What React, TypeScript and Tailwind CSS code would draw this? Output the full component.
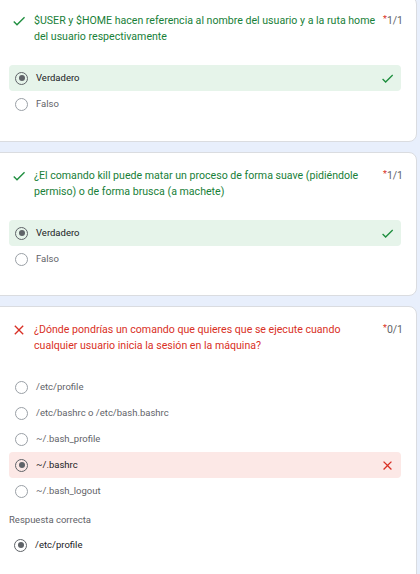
import React from "react";

type Opt = { label: string; state?: "ok" | "bad"; selected?: boolean };

const Check = ({ className = "" }: { className?: string }) => (
  <svg viewBox="0 0 24 24" className={className} fill="currentColor">
    <path d="M9 16.17 4.83 12l-1.42 1.41L9 19 21 7l-1.41-1.41z" />
  </svg>
);

const Cross = ({ className = "" }: { className?: string }) => (
  <svg viewBox="0 0 24 24" className={className} fill="currentColor">
    <path d="M19 6.41 17.59 5 12 10.59 6.41 5 5 6.41 10.59 12 5 17.59 6.41 19 12 13.41 17.59 19 19 17.59 13.41 12z" />
  </svg>
);

const Radio = ({ selected }: { selected?: boolean }) => (
  <span
    className={
      "flex h-[13px] w-[13px] shrink-0 items-center justify-center rounded-full border " +
      (selected ? "border-[#5f6368]" : "border-[#9aa0a6]")
    }
  >
    {selected && <span className="h-[6px] w-[6px] rounded-full bg-[#5f6368]" />}
  </span>
);

const Option = ({ label, state, selected }: Opt) => {
  const bg = state === "ok" ? "bg-[#e6f4ea]" : state === "bad" ? "bg-[#fce8e6]" : "";
  return (
    <div className={"flex h-[26px] items-center rounded pl-[6px] pr-[6px] " + bg}>
      <Radio selected={selected} />
      <span
        className={
          "ml-[8px] flex-1 text-[9.5px] " + (selected ? "text-[#202124]" : "text-[#5f6368]")
        }
      >
        {label}
      </span>
      {state === "ok" && <Check className="h-[15px] w-[15px] text-[#1e8e3e]" />}
      {state === "bad" && <Cross className="h-[15px] w-[15px] text-[#d93025]" />}
    </div>
  );
};

const Title = ({ text, ok, score }: { text: string; ok: boolean; score: string }) => (
  <div className="flex items-start pl-[2px]">
    <div className="flex h-[16px] w-[16px] shrink-0 items-center justify-center">
      {ok ? (
        <Check className="h-[16px] w-[16px] text-[#1e8e3e]" />
      ) : (
        <Cross className="h-[16px] w-[16px] text-[#d93025]" />
      )}
    </div>
    <p
      className={
        "ml-[7px] flex-1 pr-[4px] text-[10.6px] leading-[16px] " +
        (ok ? "text-[#188038]" : "text-[#d93025]")
      }
    >
      {text}
    </p>
    <span className="w-[18px] text-[10.5px] leading-[16px] text-[#5f6368]">
      <span className="align-top text-[9px] leading-[12px] text-[#d93025]">*</span>
      {score}
    </span>
  </div>
);

const Card = ({ children, className = "" }: { children: React.ReactNode; className?: string }) => (
  <div
    className={
      "-ml-[10px] mr-[3px] rounded-lg border border-[#dadce0] bg-white pl-[18px] pr-[15px] " +
      className
    }
  >
    {children}
  </div>
);

export default function App() {
  return (
    <div
      className="flex h-[574px] w-[420px] flex-col gap-[10px] overflow-hidden bg-[#e8effc]"
      style={{ fontFamily: "Roboto, 'Liberation Sans', sans-serif" }}
    >
      <Card className="-mt-[4px] pt-[16px] pb-[24px]">
        <Title
          ok
          score="1/1"
          text="$USER y $HOME hacen referencia al nombre del usuario y a la ruta home del usuario respectivamente"
        />
        <div className="mt-[20px]">
          <Option label="Verdadero" state="ok" selected />
          <Option label="Falso" />
        </div>
      </Card>

      <Card className="pt-[15px] pb-[23px]">
        <Title
          ok
          score="1/1"
          text="¿El comando kill puede matar un proceso de forma suave (pidiéndole permiso) o de forma brusca (a machete)"
        />
        <div className="mt-[20px]">
          <Option label="Verdadero" state="ok" selected />
          <Option label="Falso" />
        </div>
      </Card>

      <Card className="pt-[15px] pb-[24px]">
        <Title
          ok={false}
          score="0/1"
          text="¿Dónde pondrías un comando que quieres que se ejecute cuando cualquier usuario inicia la sesión en la máquina?"
        />
        <div className="mt-[20px]">
          <Option label="/etc/profile" />
          <Option label="/etc/bashrc o /etc/bash.bashrc" />
          <Option label="~/.bash_profile" />
          <Option label="~/.bashrc" state="bad" selected />
          <Option label="~/.bash_logout" />
        </div>
        <p className="mt-[8px] text-[9.5px] leading-[16px] text-[#5f6368]">Respuesta correcta</p>
        <div className="mt-[4px] -ml-[1px]">
          <Option label="/etc/profile" selected />
        </div>
      </Card>
    </div>
  );
}
